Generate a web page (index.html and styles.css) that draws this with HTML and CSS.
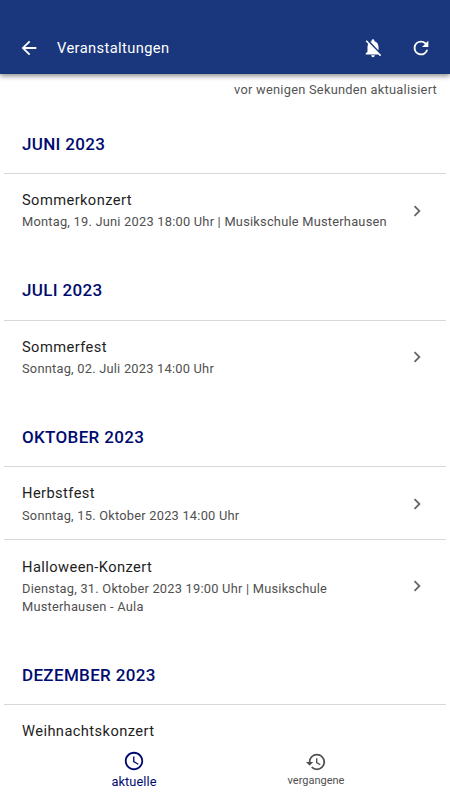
FILE: index.html
```html
<!DOCTYPE html>
<html lang="de">
<head>
<meta charset="utf-8">
<title>Veranstaltungen</title>
<link rel="stylesheet" href="styles.css">
</head>
<body>
<div class="app">
  <header class="bar">
    <svg class="icon back" viewBox="0 0 24 24"><path d="M20 11H7.83l5.59-5.59L12 4l-8 8 8 8 1.41-1.41L7.83 13H20z"/></svg>
    <h1 class="title"><span>Veranstaltungen</span></h1>
    <svg class="icon bell" viewBox="0 0 24 24"><path d="M20 18.69L7.84 6.14 5.27 3.49 4 4.76l2.8 2.8v.01c-.52.99-.8 2.16-.8 3.42v5l-2 2v1h13.73l2 2L21 19.72l-1-1.03zM12 22c1.11 0 2-.89 2-2h-4c0 1.11.89 2 2 2zm6-7.32V11c0-3.08-1.64-5.64-4.5-6.32V4c0-.83-.67-1.5-1.5-1.5s-1.5.67-1.5 1.5v.68c-.15.03-.29.08-.42.12-.1.03-.2.07-.3.11h-.01c-.01 0-.01 0-.02.01-.23.09-.46.2-.68.31 0 0-.01 0-.01.01L18 14.68z"/></svg>
    <svg class="icon" viewBox="0 0 24 24"><path d="M17.65 6.35A7.958 7.958 0 0 0 12 4a8 8 0 1 0 7.73 10h-2.08A5.99 5.99 0 1 1 12 6c1.66 0 3.14.69 4.22 1.78L13 11h7V4z"/></svg>
  </header>
  <main class="content">
    <p class="updated"><span>vor wenigen Sekunden aktualisiert</span></p>
    <section class="month">
      <h2><span>JUNI 2023</span></h2>
      <article class="event"><div class="text"><h3><span>Sommerkonzert</span></h3><p><span>Montag, 19. Juni 2023 18:00 Uhr | Musikschule Musterhausen</span></p></div><svg class="chevron" viewBox="0 0 24 24"><path d="M10 6 8.59 7.41 13.17 12l-4.58 4.59L10 18l6-6z"/></svg></article>
    </section>
    <section class="month">
      <h2><span>JULI 2023</span></h2>
      <article class="event"><div class="text"><h3><span>Sommerfest</span></h3><p><span>Sonntag, 02. Juli 2023 14:00 Uhr</span></p></div><svg class="chevron" viewBox="0 0 24 24"><path d="M10 6 8.59 7.41 13.17 12l-4.58 4.59L10 18l6-6z"/></svg></article>
    </section>
    <section class="month">
      <h2><span>OKTOBER 2023</span></h2>
      <article class="event"><div class="text"><h3><span>Herbstfest</span></h3><p><span>Sonntag, 15. Oktober 2023 14:00 Uhr</span></p></div><svg class="chevron" viewBox="0 0 24 24"><path d="M10 6 8.59 7.41 13.17 12l-4.58 4.59L10 18l6-6z"/></svg></article>
      <article class="event"><div class="text"><h3><span>Halloween-Konzert</span></h3><p><span>Dienstag, 31. Oktober 2023 19:00 Uhr | Musikschule<br>Musterhausen - Aula</span></p></div><svg class="chevron" viewBox="0 0 24 24"><path d="M10 6 8.59 7.41 13.17 12l-4.58 4.59L10 18l6-6z"/></svg></article>
    </section>
    <section class="month">
      <h2><span>DEZEMBER 2023</span></h2>
      <article class="event"><div class="text"><h3><span>Weihnachtskonzert</span></h3></div></article>
    </section>
  </main>
  <nav class="tabs">
    <div class="tab active"><svg viewBox="0 0 24 24"><path d="M11.99 2C6.47 2 2 6.48 2 12s4.47 10 9.99 10C17.52 22 22 17.52 22 12S17.52 2 11.99 2zM12 20c-4.42 0-8-3.58-8-8s3.58-8 8-8 8 3.58 8 8-3.58 8-8 8zm.5-13H11v6l5.25 3.15.75-1.23-4.5-2.67z"/></svg><span>aktuelle</span></div>
    <div class="tab"><svg viewBox="0 0 24 24"><path d="M13 3a9 9 0 0 0-9 9H1l3.89 3.89.07.14L9 12H6c0-3.87 3.13-7 7-7s7 3.13 7 7-3.13 7-7 7c-1.93 0-3.68-.79-4.94-2.06l-1.42 1.42A8.954 8.954 0 0 0 13 21a9 9 0 0 0 0-18zm-1 5v5l4.28 2.54.72-1.21-3.5-2.08V8z"/></svg><span>vergangene</span></div>
  </nav>
</div>
</body>
</html>
```
FILE: styles.css
```css
* { box-sizing: border-box; }
body, h1, h2, h3, p { margin: 0; font-weight: 400; }
body { font-family: Roboto, sans-serif; background: #fff; color: #1d1d1d; }
svg { fill: currentColor; flex: none; display: block; }
.app { height: 800px; display: flex; flex-direction: column; overflow: hidden; }
.bar { height: 74px; flex: none; display: flex; align-items: center; padding: 21px 18px 0 18px; background: #1a367c; color: #fff; box-shadow: 0 2px 5px rgba(0,0,0,.45); position: relative; }
.icon { width: 22px; height: 22px; }
.bell { margin-right: 26px; }
.title { flex: 1; margin-left: 17px; font-size: 14.67px; letter-spacing: .4px; }
.content { flex: 1; min-height: 0; overflow: hidden; padding: 0 4px; }
.updated { height: 33px; padding: 7.4px 9px 0 0; text-align: right; font-size: 12.83px; line-height: 17px; letter-spacing: .25px; color: #555; }
.month h2 { height: 66px; padding: 25.7px 18px 0; font-size: 17px; line-height: 22px; letter-spacing: .33px; font-weight: 500; color: #000b70; }
.month { padding-bottom: 7.4px; }
.event { border-top: 1px solid #d8d8d8; padding: 16.3px 19px 14.4px 18px; display: flex; align-items: center; justify-content: space-between; }
.event h3 { font-size: 14.67px; line-height: 20px; letter-spacing: .42px; }
.event p { font-size: 12.83px; line-height: 18.3px; letter-spacing: .23px; color: #505050; padding-top: 3.2px; }
.chevron { width: 22px; height: 22px; margin: -1px -1px 0 0; color: #666; }
.tabs { height: 56px; flex: none; display: flex; padding: 0 43px; background: #fff; }
.tab { flex: 1; display: flex; flex-direction: column; align-items: center; font-size: 11px; color: #505050; padding-top: 7px; }
.tab svg { width: 22px; height: 22px; }
.tab span { padding-top: 1px; }
.active { color: #000b70; font-size: 12.83px; letter-spacing: .05px; padding-top: 6px; }
.active span { padding-top: 2px; }
```
